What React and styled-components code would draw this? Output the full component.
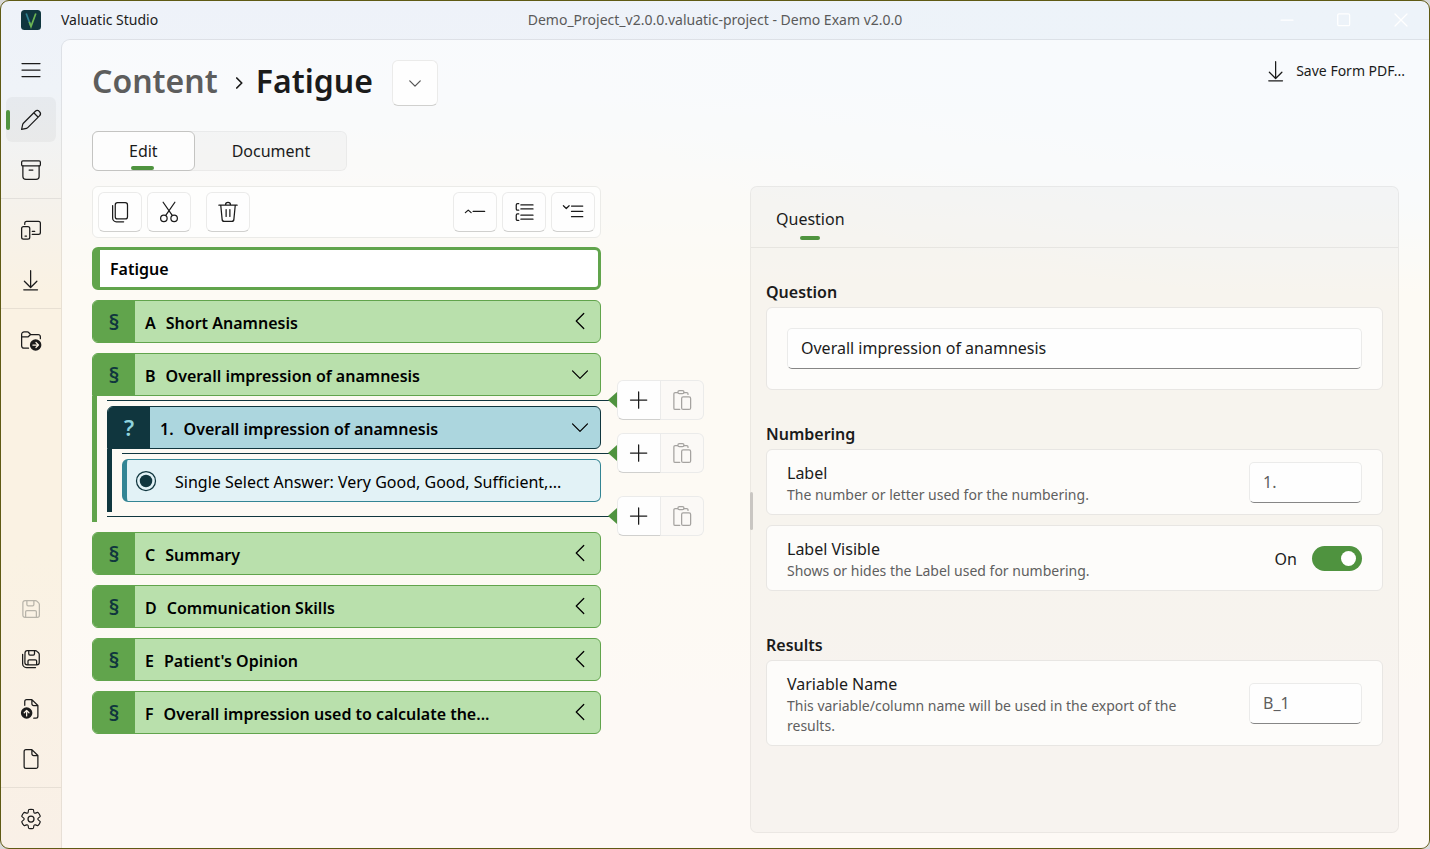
import React, { useState } from "react";
import styled, { createGlobalStyle, css } from "styled-components";

const color = {
  text: "#1b1b1b",
  muted: "#5f5f5f",
  accent: "#4f933f",
  section: "#61a44c",
  sectionFill: "#b9e0ac",
  question: "#10363e",
  questionFill: "#acd6de",
  answer: "#338594",
  answerFill: "#e2f2f6",
  line: "rgba(0, 0, 0, 0.07)",
};

const GlobalStyle = createGlobalStyle`
  *, *::before, *::after { box-sizing: border-box; }
  body {
    margin: 0;
    background: #d8d8d8;
    color: ${color.text};
    font-family: "Noto Sans", "Open Sans", sans-serif;
    font-size: 16px;
    line-height: 24px;
  }
  button, input { font: inherit; color: inherit; }
  h1, h2, p { margin: 0; }
`;

/* ---------- icons, drawn on a 20 unit grid ---------- */

const Glyph = styled.svg`
  display: block;
  flex: none;
  width: 24px;
  height: 24px;
  overflow: visible;
  fill: none;
  stroke: currentColor;
  stroke-width: 1;
  stroke-linecap: round;
  stroke-linejoin: round;
`;

const icons = {
  menu: <path d="M2.8 4.8h14.4M2.8 10h14.4M2.8 15.2h14.4" />,
  edit: (
    <path
      fill="currentColor"
      stroke="none"
      d="M17.18 2.93a2.97 2.97 0 0 0-4.26-.06l-9.37 9.38c-.33.33-.56.74-.66 1.2l-.88 3.94a.5.5 0 0 0 .6.6l3.92-.87c.46-.1.9-.34 1.23-.68l9.36-9.36a2.97 2.97 0 0 0 .06-4.15zm-3.55.65a1.97 1.97 0 1 1 2.79 2.79l-.68.68-2.8-2.8.69-.67zm-1.4 1.38 2.8 2.8-8 8c-.2.2-.46.35-.75.41l-3.15.7.7-3.18c.07-.27.2-.51.4-.7l8-8.03z"
    />
  ),
  archive: (
    <>
      <rect x="2.5" y="2.7" width="15" height="4" rx="1" />
      <path d="M3.5 6.7V15a2.5 2.5 0 0 0 2.5 2.5h8a2.5 2.5 0 0 0 2.5-2.5V6.7M8.5 10h3" />
    </>
  ),
  devices: (
    <>
      <path d="M5 5.5V4.5A1.5 1.5 0 0 1 6.5 3H16a1.5 1.5 0 0 1 1.5 1.5V12a1.5 1.5 0 0 1-1.5 1.5h-5M11 11h2" />
      <rect x="2.5" y="7.2" width="6.5" height="10" rx="1.5" />
      <path d="M5.2 14.8h1.2" />
    </>
  ),
  download: <path d="M9.7 2.5v13.3M4.7 11l5 5 5-5M4.2 17.8h11" />,
  folder: (
    <>
      <path d="M8 16.5H4.5a2 2 0 0 1-2-2v-9a2 2 0 0 1 2-2h2.7a1 1 0 0 1 .7.3l1.8 1.8h6a2 2 0 0 1 1.8 2v1.3M2.5 7.5h4.8a1 1 0 0 0 .7-.3l1.7-1.6" />
      <circle cx="13.7" cy="14" r="4.6" fill="currentColor" stroke="none" />
      <path stroke="#faf2e3" d="M11.5 14h4.2M14 12l2 2-2 2" />
    </>
  ),
  save: (
    <path d="M3.5 5a1.7 1.7 0 0 1 1.7-1.7h8.3a2 2 0 0 1 1.4.6l1.2 1.2a2 2 0 0 1 .6 1.4V15a1.7 1.7 0 0 1-1.7 1.7H5.2A1.7 1.7 0 0 1 3.5 15zM6.7 3.4v3a1 1 0 0 0 1 1h3.6a1 1 0 0 0 1-1v-3M5.7 16.6v-4.4a1 1 0 0 1 1-1h6.6a1 1 0 0 1 1 1v4.4" />
  ),
  saveAll: (
    <>
      <path d="M5.2 5.1A1.9 1.9 0 0 1 7 3.3h6.4a2 2 0 0 1 1.4.6l1.2 1.1a2 2 0 0 1 .6 1.4v6.4a1.9 1.9 0 0 1-1.9 1.9H7a1.9 1.9 0 0 1-1.9-1.9zM8.2 3.4v2.4a1 1 0 0 0 1 1h2.6a1 1 0 0 0 1-1V3.4M7.6 14.6v-3a1 1 0 0 1 1-1h4.9a1 1 0 0 1 1 1v3" />
      <path d="M3.3 6.2v7.6a3 3 0 0 0 3 3h7.3" />
    </>
  ),
  upload: (
    <>
      <path d="M5 7V4a1.5 1.5 0 0 1 1.5-1.5h4.2l4.8 4.7v8.6a1.5 1.5 0 0 1-1.5 1.5h-1.8M10.7 2.6v3.2a1.4 1.4 0 0 0 1.4 1.4h3.2" />
      <circle cx="6.5" cy="13.2" r="4.6" fill="currentColor" stroke="none" />
      <path stroke="#faf2e6" d="M6.5 15.5v-4.3M4.6 13l1.9-1.9L8.4 13" />
    </>
  ),
  file: (
    <path d="M4.5 4A1.5 1.5 0 0 1 6 2.5h4.7l4.8 4.7V16a1.5 1.5 0 0 1-1.5 1.5H6A1.5 1.5 0 0 1 4.5 16zM10.7 2.6v3.2a1.4 1.4 0 0 0 1.4 1.4h3.2" />
  ),
  settings: (
    <>
      <path
        transform="translate(.9 .9) scale(.91)"
        d="M1.91 7.38A8.5 8.5 0 0 1 3.7 4.3a.5.5 0 0 1 .54-.13l1.92.68a1 1 0 0 0 1.32-.76l.36-2a.5.5 0 0 1 .4-.4 8.53 8.53 0 0 1 3.55 0c.2.04.35.2.38.4l.37 2a1 1 0 0 0 1.32.76l1.92-.68a.5.5 0 0 1 .54.13 8.5 8.5 0 0 1 1.78 3.08c.06.2 0 .4-.15.54l-1.56 1.32a1 1 0 0 0 0 1.52l1.56 1.32a.5.5 0 0 1 .15.54 8.5 8.5 0 0 1-1.78 3.08.5.5 0 0 1-.54.13l-1.92-.68a1 1 0 0 0-1.32.76l-.37 2a.5.5 0 0 1-.38.4 8.53 8.53 0 0 1-3.56 0 .5.5 0 0 1-.39-.4l-.36-2a1 1 0 0 0-1.32-.76l-1.92.68a.5.5 0 0 1-.54-.13 8.5 8.5 0 0 1-1.78-3.08.5.5 0 0 1 .15-.54l1.56-1.32a1 1 0 0 0 0-1.52L2.06 7.92a.5.5 0 0 1-.15-.54z"
      />
      <circle cx="10" cy="10" r="2.4" />
    </>
  ),
  copy: (
    <>
      <rect x="6.2" y="2.5" width="9.8" height="13" rx="1.8" />
      <path d="M4.1 4.8V14.8a3 3 0 0 0 3 3h5.8" />
    </>
  ),
  cut: (
    <>
      <circle cx="5.9" cy="15" r="2.6" />
      <circle cx="14.1" cy="15" r="2.6" />
      <path d="M5.3 2.2l7.3 10.5M14.7 2.2L7.4 12.7" />
    </>
  ),
  trash: (
    <path d="M2.7 4.5h14.6M8 4.3a2 2 0 0 1 4 0M4.2 4.6l1.1 11.3a1.7 1.7 0 0 0 1.7 1.6h6a1.7 1.7 0 0 0 1.7-1.6l1.1-11.3M8.5 8v5.5M11.5 8v5.5" />
  ),
  collapse: <path d="M2.3 10.5l2.3-2 2.3 2M8.5 9.5h9.2" />,
  levels: (
    <path d="M7.5 4.3h9.7M7.5 7.5h9.7M7.5 12.5h9.7M7.5 15.7h9.7M5.8 3.3H4.8a1 1 0 0 0-1 1v3.2a1 1 0 0 0 1 1h1M5.8 11.5H4.8a1 1 0 0 0-1 1v3.2a1 1 0 0 0 1 1h1" />
  ),
  expand: <path d="M2.3 5l2.3 2.2L6.9 5M8.8 5.2h9M8.8 9.5h9M8.8 13.7h9" />,
  plus: <path d="M9.7 3.5v13M3.2 10h13" />,
  paste: (
    <>
      <path d="M6.5 4H4.5a1 1 0 0 0-1 1v11.5a1 1 0 0 0 1 1h3.7M11.5 4h2.3a1 1 0 0 1 1 1v.5" />
      <rect x="6.7" y="2.5" width="4.9" height="2.4" rx="1.2" />
      <rect x="9.7" y="7.5" width="7.2" height="10" rx="1.2" />
    </>
  ),
  chevronDown: <path d="M4 7.5l6 6 6-6" />,
  chevronLeft: <path d="M13 4l-6 6 6 6" />,
  chevronSmall: <path d="M5.8 8.3l4.2 4.2 4.2-4.2" />,
  crumb: <path strokeWidth="1.4" d="M9.8 6l4 4-4 4" />,
  radio: (
    <>
      <circle cx="10" cy="10" r="7.6" />
      <circle cx="10" cy="10" r="5" fill="currentColor" stroke="none" />
    </>
  ),
  minimize: <path d="M5.2 10h9.6" />,
  maximize: <rect x="5" y="5" width="9.5" height="9.5" rx="1" />,
  close: <path d="M5.2 5.2l9.6 9.6M14.8 5.2l-9.6 9.6" />,
};

const Icon = ({ name }) => (
  <Glyph viewBox="0.4 0.4 19.2 19.2" aria-hidden="true">
    {icons[name]}
  </Glyph>
);

/* ---------- window frame ---------- */

const Window = styled.div`
  display: flex;
  flex-direction: column;
  min-height: 100vh;
  overflow: hidden;
  border: 1px solid #5f5a14;
  border-radius: 9px;
  background:
    radial-gradient(ellipse 900px 300px at 100% 0, #edf3f9 0, rgba(237, 243, 249, 0.9) 50%, rgba(237, 243, 249, 0) 100%),
    linear-gradient(180deg, #eef2f9 0, #eff3f8 90px, #f5f2ec 200px, #faf2e3 290px, #faf2e3 65%, #f9f0e7 100%);
`;

const TitleBar = styled.header`
  display: grid;
  grid-template-columns: 1fr auto 1fr;
  align-items: center;
  height: 38px;
  font-size: 14px;
`;

const Brand = styled.div`
  display: flex;
  align-items: center;
  gap: 20px;
  padding-left: 20px;
`;

const Logo = styled.svg`
  width: 20px;
  height: 20px;
`;

const DocumentTitle = styled.div`
  color: #5a5a5a;
`;

const WindowControls = styled.div`
  display: flex;
  justify-content: flex-end;
`;

const WindowButton = styled.button`
  display: grid;
  place-items: center;
  width: 57px;
  height: 38px;
  padding: 0;
  border: 0;
  background: none;
  color: #ffffff;
`;

const Workspace = styled.div`
  display: flex;
  flex: 1;
`;

/* ---------- side navigation ---------- */

const SideNav = styled.nav`
  display: flex;
  flex-direction: column;
  gap: 5px;
  width: 60px;
  flex: none;
  padding: 8px 0 7px;
`;

const NavButton = styled.button`
  display: grid;
  place-items: center;
  position: relative;
  height: 45px;
  margin: 0 5px;
  padding: 1px 0 0;
  border: 0;
  border-radius: 6px;
  background: ${(p) => (p.$active ? "rgba(0, 0, 0, 0.035)" : "none")};
  color: ${(p) => (p.disabled ? "#b8b4aa" : color.text)};
  ${(p) =>
    p.$active &&
    css`
      &::before {
        content: "";
        position: absolute;
        left: 0;
        width: 4px;
        height: 20px;
        border-radius: 2px;
        background: ${color.accent};
      }
    `}
`;

const NavRule = styled.hr`
  width: 100%;
  height: 1px;
  margin: 1px 0 3px;
  border: 0;
  background: ${color.line};
`;

const NavSpacer = styled.div`
  flex: 1;
`;

/* ---------- page ---------- */

const Page = styled.main`
  display: flex;
  flex-direction: column;
  flex: 1;
  min-width: 0;
  border: 1px solid ${color.line};
  border-width: 1px 0 0 1px;
  border-top-left-radius: 9px;
  background: rgba(255, 255, 255, 0.6);
  background-clip: padding-box;
`;

const PageHeader = styled.div`
  display: flex;
  justify-content: space-between;
  align-items: flex-start;
  padding: 10px 24px 0 30px;
`;

const Breadcrumb = styled.div`
  display: flex;
  align-items: center;
  gap: 7px;
  margin-top: 10px;
`;

const crumbText = css`
  padding-bottom: 4px;
  font-size: 32px;
  font-weight: 600;
  line-height: 40px;
`;

const Crumb = styled.a`
  ${crumbText}
  color: #5d5d5d;
  text-decoration: none;
`;

const PageTitle = styled.h1`
  ${crumbText}
`;

const buttonFace = css`
  display: grid;
  place-items: center;
  padding: 0;
  border: 1px solid #ebebea;
  border-bottom-color: #d0d0ce;
  border-radius: 6px;
  background: #fefefe;
`;

const TitleMenu = styled.button`
  ${buttonFace}
  width: 46px;
  height: 46px;
  margin-left: 12px;
  color: #555;
`;

const LinkButton = styled.button`
  display: flex;
  align-items: center;
  gap: 8px;
  height: 41px;
  padding: 0;
  border: 0;
  background: none;
  font-size: 14px;
`;

const Tabs = styled.div`
  display: flex;
  align-self: flex-start;
  margin: 25px 30px 0;
  border-radius: 6px;
  background: rgba(0, 0, 0, 0.025);
  box-shadow: inset 0 0 0 1px rgba(0, 0, 0, 0.04);
`;

const Tab = styled.button`
  position: relative;
  height: 40px;
  padding: 0 36px;
  border: 1px solid ${(p) => (p.$active ? "#c4c4c2" : "transparent")};
  border-radius: 6px;
  background: ${(p) => (p.$active ? "#fdfdfd" : "none")};
  ${(p) =>
    p.$active &&
    css`
      &::after {
        content: "";
        position: absolute;
        left: calc(50% - 12px);
        bottom: 0;
        width: 23px;
        height: 4px;
        border-radius: 2px;
        background: ${color.accent};
      }
    `}
`;

const Panes = styled.div`
  display: grid;
  grid-template-columns: minmax(0, 658fr) minmax(0, 649fr);
  flex: 1;
  padding: 15px 30px 15px;
`;

/* ---------- content tree ---------- */

const Tree = styled.div`
  display: flex;
  flex-direction: column;
  gap: 10px;
  margin-right: 149px;
`;

const Toolbar = styled.div`
  display: flex;
  gap: 5px;
  margin-bottom: -1px;
  padding: 5px;
  border: 1px solid #ebebe8;
  border-radius: 6px;
  background: #fefefd;
`;

const ToolButton = styled.button`
  ${buttonFace}
  width: 44px;
  height: 40px;
`;

const ToolGap = styled.span`
  flex: ${(p) => (p.$grow ? 1 : "0 0 5px")};
`;

const FormTitle = styled.div`
  height: 43px;
  padding: 0 10px;
  border: 3px solid ${color.section};
  border-left-width: 8px;
  border-radius: 6px;
  background: #ffffff;
  color: #000;
  font-weight: 600;
  line-height: 38px;
`;

const tones = {
  section: { edge: color.section, fill: color.sectionFill, mark: color.question },
  question: { edge: color.question, fill: color.questionFill, mark: "#8fd3dd" },
};

const Row = styled.div`
  display: flex;
  align-items: center;
  height: 43px;
  overflow: hidden;
  border: 1px solid ${(p) => tones[p.$tone].edge};
  border-radius: ${(p) => (p.$open ? "6px 6px 6px 0" : "6px")};
  background: ${(p) => tones[p.$tone].fill};
  color: #000;
  font-weight: 600;
`;

const RowMark = styled.span`
  display: grid;
  place-items: center;
  align-self: stretch;
  width: 42px;
  flex: none;
  padding-bottom: 2px;
  background: ${(p) => tones[p.$tone].edge};
  color: ${(p) => tones[p.$tone].mark};
  font-size: 22px;
  font-weight: 600;
`;

const RowNumber = styled.span`
  margin: 0 10px;
  padding-top: 2px;
`;

const RowName = styled.span`
  flex: 1;
  min-width: 0;
  padding-top: 2px;
  overflow: hidden;
  text-overflow: ellipsis;
  white-space: nowrap;
`;

const RowToggle = styled.button`
  display: grid;
  place-items: center;
  width: 40px;
  height: 40px;
  padding: 0 0 2px;
  border: 0;
  background: none;
`;

const Branch = styled.div`
  padding-left: 10px;
  padding-bottom: ${(p) => (p.$tone === "question" ? "10px" : "0")};
  border-left: 5px solid ${(p) => tones[p.$tone].edge};
`;

const AnswerRow = styled.div`
  display: flex;
  align-items: center;
  gap: 17px;
  height: 43px;
  padding: 0 20px 0 7px;
  border: 1px solid ${color.answer};
  border-left-width: 5px;
  border-radius: 6px;
  background: ${color.answerFill};
  color: ${color.question};
`;

const AnswerText = styled.span`
  padding-top: 2px;
  color: #000;
  overflow: hidden;
  text-overflow: ellipsis;
  white-space: nowrap;
`;

const InsertPoint = styled.div`
  position: relative;
  height: 10px;
  &::before {
    content: "";
    position: absolute;
    top: 4px;
    left: 0;
    right: -8px;
    height: 1px;
    background: ${color.question};
  }
`;

const InsertTools = styled.div`
  position: absolute;
  top: -16px;
  left: 100%;
  display: flex;
  align-items: center;
  padding-left: 7px;
  &::before {
    content: "";
    border: 8px solid transparent;
    border-left-width: 0;
    border-right: 9px solid ${color.accent};
  }
`;

const InsertButton = styled.button`
  ${buttonFace}
  width: 44px;
  height: 40px;
  border-radius: 6px 0 0 6px;
  &:disabled {
    width: 43px;
    border-left-width: 0;
    border-bottom-color: #ebebea;
    border-radius: 0 6px 6px 0;
    background: rgba(250, 248, 246, 0.6);
    color: #a5a3a0;
  }
`;

/* ---------- property panel ---------- */

const Panel = styled.section`
  position: relative;
  border: 1px solid rgba(0, 0, 0, 0.05);
  border-radius: 7px;
  background: rgba(0, 0, 0, 0.025);
  &::before {
    content: "";
    position: absolute;
    top: 305px;
    left: -1px;
    width: 3px;
    height: 38px;
    border-radius: 2px;
    background: #c9c6c2;
  }
`;

const PanelTabs = styled.div`
  display: flex;
  padding: 0 15px;
  border-bottom: 1px solid rgba(0, 0, 0, 0.06);
`;

const PanelTab = styled.button`
  position: relative;
  height: 60px;
  padding: 4px 10px 0;
  border: 0;
  background: none;
  &::after {
    content: "";
    position: absolute;
    left: calc(50% - 10px);
    bottom: 7px;
    width: 20px;
    height: 4px;
    border-radius: 2px;
    background: ${color.accent};
  }
`;

const PanelBody = styled.div`
  padding: 0 15px 15px;
`;

const Group = styled.div`
  padding-top: 29px;
`;

const GroupTitle = styled.h2`
  font-size: 16px;
  font-weight: 600;
  line-height: 30px;
`;

const Card = styled.div`
  display: flex;
  align-items: center;
  gap: 30px;
  min-height: 66px;
  margin-bottom: ${(p) => (p.$spaced ? "10px" : "0")};
  padding: ${(p) => (p.$tall ? "20px" : "9px 20px")};
  border: 1px solid #e8e6e3;
  border-radius: 6px;
  background: #fdfcfa;
`;

const CardText = styled.div`
  flex: 1;
  min-width: 0;
  padding-top: 2px;
`;

const CardLabel = styled.label`
  display: block;
  line-height: 24px;
`;

const CardHint = styled.p`
  color: ${color.muted};
  font-size: 14px;
  line-height: 20px;
`;

const TextBox = styled.input`
  width: ${(p) => (p.$wide ? "100%" : "113px")};
  height: 41px;
  padding: ${(p) => (p.$wide ? "0 13px 2px" : "0 13px")};
  border: 1px solid #ebebea;
  border-bottom-color: #868686;
  border-radius: 5px;
  background: #fefefe;
  color: ${(p) => (p.$wide ? color.text : color.muted)};
  outline: none;
`;

const SwitchField = styled.div`
  display: flex;
  align-items: center;
  gap: 15px;
`;

const SwitchState = styled.span`
  padding-top: 2px;
`;

const Switch = styled.input`
  appearance: none;
  display: flex;
  align-items: center;
  justify-content: ${(p) => (p.checked ? "flex-end" : "flex-start")};
  width: 50px;
  height: 25px;
  margin: 0;
  padding: 0 6px;
  border-radius: 13px;
  background: ${(p) => (p.checked ? color.accent : "#8a8a8a")};
  &::before {
    content: "";
    width: 15px;
    height: 15px;
    border-radius: 50%;
    background: #ffffff;
  }
`;

/* ---------- pieces ---------- */

const TreeRow = ({ tone = "section", number, name, open }) => (
  <Row $tone={tone} $open={open}>
    <RowMark $tone={tone}>{tone === "section" ? "§" : "?"}</RowMark>
    <RowNumber>{number}</RowNumber>
    <RowName>{name}</RowName>
    <RowToggle aria-label={`Toggle ${name}`} aria-expanded={!!open}>
      <Icon name={open ? "chevronDown" : "chevronLeft"} />
    </RowToggle>
  </Row>
);

const Insert = () => (
  <InsertPoint>
    <InsertTools>
      <InsertButton aria-label="Add">
        <Icon name="plus" />
      </InsertButton>
      <InsertButton aria-label="Paste" disabled>
        <Icon name="paste" />
      </InsertButton>
    </InsertTools>
  </InsertPoint>
);

const NavItem = ({ icon, label, active, disabled }) => (
  <NavButton aria-label={label} $active={active} disabled={disabled}>
    <Icon name={icon} />
  </NavButton>
);

const Tool = ({ icon, label }) => (
  <ToolButton aria-label={label}>
    <Icon name={icon} />
  </ToolButton>
);

const closingSections = [
  ["C", "Summary"],
  ["D", "Communication Skills"],
  ["E", "Patient's Opinion"],
  ["F", "Overall impression used to calculate the..."],
];

export default function App() {
  const [question, setQuestion] = useState("Overall impression of anamnesis");
  const [visible, setVisible] = useState(true);

  return (
    <>
      <GlobalStyle />
      <Window>
        <TitleBar>
          <Brand>
            <Logo viewBox="0 0 20 20" aria-hidden="true">
              <rect width="20" height="20" rx="3.5" fill="#10363e" />
              <g fill="none" strokeWidth="1.7">
                <path d="M5.2 3.5l4.6 12.5" stroke="#2f8391" />
                <path d="M14.8 3.5L10 16.5l-1.7-4.6" stroke="#6db553" />
              </g>
            </Logo>
            <span>Valuatic Studio</span>
          </Brand>
          <DocumentTitle>Demo_Project_v2.0.0.valuatic-project - Demo Exam v2.0.0</DocumentTitle>
          <WindowControls>
            <WindowButton aria-label="Minimize"><Icon name="minimize" /></WindowButton>
            <WindowButton aria-label="Maximize"><Icon name="maximize" /></WindowButton>
            <WindowButton aria-label="Close"><Icon name="close" /></WindowButton>
          </WindowControls>
        </TitleBar>

        <Workspace>
          <SideNav>
            <NavItem icon="menu" label="Menu" />
            <NavItem icon="edit" label="Edit content" active />
            <NavItem icon="archive" label="Archive" />
            <NavRule />
            <NavItem icon="devices" label="Devices" />
            <NavItem icon="download" label="Download" />
            <NavRule />
            <NavItem icon="folder" label="Open folder" />
            <NavSpacer />
            <NavItem icon="save" label="Save" disabled />
            <NavItem icon="saveAll" label="Save as" />
            <NavItem icon="upload" label="Open file" />
            <NavItem icon="file" label="New file" />
            <NavRule />
            <NavItem icon="settings" label="Settings" />
          </SideNav>

          <Page>
            <PageHeader>
              <Breadcrumb>
                <Crumb href="#content">Content</Crumb>
                <Icon name="crumb" />
                <PageTitle>Fatigue</PageTitle>
                <TitleMenu aria-label="Choose form"><Icon name="chevronSmall" /></TitleMenu>
              </Breadcrumb>
              <LinkButton>
                <Icon name="download" />
                Save Form PDF...
              </LinkButton>
            </PageHeader>

            <Tabs>
              <Tab $active>Edit</Tab>
              <Tab>Document</Tab>
            </Tabs>

            <Panes>
              <Tree>
                <Toolbar>
                  <Tool icon="copy" label="Copy" />
                  <Tool icon="cut" label="Cut" />
                  <ToolGap />
                  <Tool icon="trash" label="Delete" />
                  <ToolGap $grow />
                  <Tool icon="collapse" label="Collapse all" />
                  <Tool icon="levels" label="Show levels" />
                  <Tool icon="expand" label="Expand all" />
                </Toolbar>
                <FormTitle>Fatigue</FormTitle>
                <TreeRow number="A" name="Short Anamnesis" />
                <div>
                  <TreeRow number="B" name="Overall impression of anamnesis" open />
                  <Branch $tone="section">
                    <Insert />
                    <TreeRow tone="question" number="1." name="Overall impression of anamnesis" open />
                    <Branch $tone="question">
                      <Insert />
                      <AnswerRow>
                        <Icon name="radio" />
                        <AnswerText>Single Select Answer: Very Good, Good, Sufficient,...</AnswerText>
                      </AnswerRow>
                    </Branch>
                    <Insert />
                  </Branch>
                </div>
                {closingSections.map(([number, name]) => (
                  <TreeRow key={number} number={number} name={name} />
                ))}
              </Tree>

              <Panel>
                <PanelTabs>
                  <PanelTab>Question</PanelTab>
                </PanelTabs>
                <PanelBody>
                  <Group>
                    <GroupTitle>Question</GroupTitle>
                    <Card $tall>
                      <TextBox
                        $wide
                        aria-label="Question"
                        value={question}
                        onChange={(e) => setQuestion(e.target.value)}
                      />
                    </Card>
                  </Group>
                  <Group>
                    <GroupTitle>Numbering</GroupTitle>
                    <Card $spaced>
                      <CardText>
                        <CardLabel htmlFor="label">Label</CardLabel>
                        <CardHint>The number or letter used for the numbering.</CardHint>
                      </CardText>
                      <TextBox id="label" value="1." readOnly />
                    </Card>
                    <Card $spaced>
                      <CardText>
                        <CardLabel htmlFor="visible">Label Visible</CardLabel>
                        <CardHint>Shows or hides the Label used for numbering.</CardHint>
                      </CardText>
                      <SwitchField>
                        <SwitchState>{visible ? "On" : "Off"}</SwitchState>
                        <Switch
                          id="visible"
                          type="checkbox"
                          role="switch"
                          checked={visible}
                          onChange={(e) => setVisible(e.target.checked)}
                        />
                      </SwitchField>
                    </Card>
                  </Group>
                  <Group>
                    <GroupTitle>Results</GroupTitle>
                    <Card>
                      <CardText>
                        <CardLabel htmlFor="variable">Variable Name</CardLabel>
                        <CardHint>This variable/column name will be used in the export of the results.</CardHint>
                      </CardText>
                      <TextBox id="variable" value="B_1" readOnly />
                    </Card>
                  </Group>
                </PanelBody>
              </Panel>
            </Panes>
          </Page>
        </Workspace>
      </Window>
    </>
  );
}
